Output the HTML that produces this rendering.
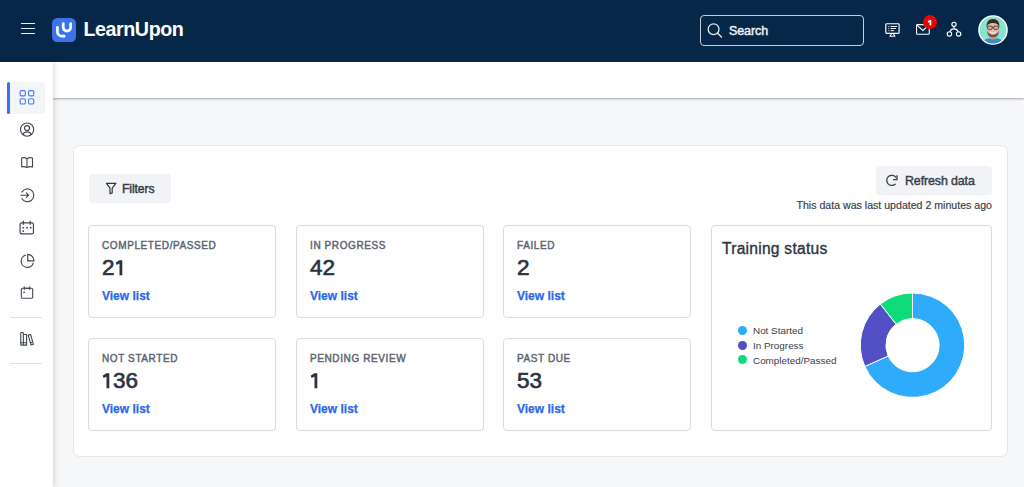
<!DOCTYPE html>
<html><head><meta charset="utf-8">
<style>
*{margin:0;padding:0;box-sizing:border-box}
html,body{width:1024px;height:487px;overflow:hidden;background:#f6f7f9;font-family:"Liberation Sans",sans-serif}
.abs{position:absolute}
#hdr{position:absolute;left:0;top:0;width:1024px;height:62px;background:#072748}
#side{position:absolute;left:0;top:62px;width:53px;height:425px;background:#fff;box-shadow:1px 0 6px rgba(0,0,0,.16);z-index:3}
#topbar{position:absolute;left:53px;top:62px;width:971px;height:36px;background:#fff;box-shadow:0 1px 2px rgba(0,0,0,.34);z-index:2}
#cont{position:absolute;left:73px;top:145.3px;width:935px;height:311.7px;background:#fff;border:1px solid #e5e7eb;border-radius:7px}
.btn{position:absolute;background:#f2f3f6;border-radius:4px}
.card{position:absolute;background:#fff;border:1px solid #d9dce1;border-radius:4px;width:188px;height:93px}
.lbl{position:absolute;left:13px;top:14px;font-size:10px;font-weight:normal;-webkit-text-stroke:0.45px #5e6672;letter-spacing:.6px;color:#5e6672;white-space:nowrap}
.num{position:absolute;left:13px;top:28.5px;font-size:22.5px;font-weight:normal;-webkit-text-stroke:0.65px #2b333e;letter-spacing:0px;color:#2b333e;white-space:nowrap}
.vl{position:absolute;left:13px;top:63px;font-size:12px;font-weight:bold;-webkit-text-stroke:0.25px #2c69e8;color:#2c69e8;white-space:nowrap}
.txt{white-space:nowrap;position:absolute}
.one{position:relative;color:transparent;-webkit-text-stroke:0 transparent;letter-spacing:-1.6px}
.one svg{position:absolute;left:0;top:0;overflow:visible}
</style></head><body>
<div id="hdr">
  <!-- hamburger -->
  <div class="abs" style="left:21px;top:23px;width:14px;height:1.4px;background:#e9edf2"></div>
  <div class="abs" style="left:21px;top:28px;width:14px;height:1.4px;background:#e9edf2"></div>
  <div class="abs" style="left:21px;top:33px;width:14px;height:1.4px;background:#e9edf2"></div>
  <!-- logo -->
  <svg class="abs" style="left:52px;top:17.5px" width="24" height="24.5" viewBox="0 0 24 24.5">
    <rect x="0" y="0" width="24" height="24.3" rx="5.5" fill="#3b73eb"/>
    <path d="M5.4 9.3 V13.7 A4.5 4.5 0 0 0 9.9 18.2 H12.1" fill="none" stroke="#fff" stroke-width="2.7" stroke-linecap="round"/>
    <path d="M11.2 5.5 V9.35 A3.75 3.75 0 0 0 18.7 9.35 V5.5" fill="none" stroke="#fff" stroke-width="2.7" stroke-linecap="round"/>
  </svg>
  <div class="txt" style="left:83.5px;top:18.4px;font-size:19.7px;font-weight:bold;color:#fff;letter-spacing:-0.45px">LearnUpon</div>
  <!-- search -->
  <div class="abs" style="left:700px;top:15px;width:164px;height:31px;border:1.3px solid #c9ced6;border-radius:4px"></div>
  <svg class="abs" style="left:706px;top:22px" width="18" height="17" viewBox="0 0 18 17">
    <circle cx="7.6" cy="7.2" r="5.4" fill="none" stroke="#e6e9ee" stroke-width="1.3"/>
    <path d="M11.6 11.2 L15.5 15" stroke="#e6e9ee" stroke-width="1.3" stroke-linecap="round"/>
  </svg>
  <div class="txt" style="left:729px;top:23.5px;font-size:12.5px;font-weight:normal;-webkit-text-stroke:0.45px #eef1f5;color:#eef1f5;letter-spacing:-0.1px">Search</div>
  <!-- monitor icon -->
  <svg class="abs" style="left:883px;top:21px" width="19" height="18" viewBox="0 0 19 18">
    <rect x="2.8" y="2.7" width="13.3" height="9.7" rx="0.9" fill="none" stroke="#fff" stroke-width="1.15"/>
    <path d="M8.6 12.5 L7 15.2 H11.9 L10.3 12.5" fill="none" stroke="#fff" stroke-width="1.1" stroke-linejoin="round"/>
    <path d="M7.6 5.5 H14 M7.6 7.5 H13 M7.6 9.6 H11" stroke="#fff" stroke-width="0.95" />
    <path d="M5.4 5.5 H6.3 M5.4 7.5 H6.3 M5.4 9.6 H6.3" stroke="#fff" stroke-width="0.95"/>
  </svg>
  <!-- mail icon -->
  <svg class="abs" style="left:914px;top:21px" width="18" height="16" viewBox="0 0 18 16">
    <rect x="2.55" y="3.65" width="12.7" height="9.65" rx="0.9" fill="none" stroke="#fff" stroke-width="1.1"/>
    <path d="M2.9 4.1 L8.9 9.4 L14.9 4.1" fill="none" stroke="#fff" stroke-width="1.1"/>
  </svg>
  <div class="abs" style="left:923px;top:15px;width:14px;height:14px;border-radius:50%;background:#e50606"></div>
  <svg class="abs" style="left:918px;top:15px" width="20" height="15" viewBox="918 15 20 15"><path d="M929.3 19.9 H931.3 V25.3 H929.6 V22 L928.3 22.7 L927.8 21.2 Z" fill="#fff"/></svg>
  <!-- org icon -->
  <svg class="abs" style="left:945px;top:20px" width="18" height="18" viewBox="0 0 18 18">
    <circle cx="9" cy="4.3" r="2.1" fill="none" stroke="#fff" stroke-width="1.15"/>
    <circle cx="4.4" cy="13.9" r="2.2" fill="none" stroke="#fff" stroke-width="1.15"/>
    <circle cx="13.6" cy="13.9" r="2.2" fill="none" stroke="#fff" stroke-width="1.15"/>
    <path d="M9 6.4 V8.8 M5.1 11.8 Q5.6 8.8 9 8.8 Q12.4 8.8 12.9 11.8" fill="none" stroke="#fff" stroke-width="1.15"/>
  </svg>
  <!-- avatar -->
  <svg class="abs" style="left:978px;top:14.5px" width="30" height="30" viewBox="0 0 30 30">
    <defs><clipPath id="av"><circle cx="15" cy="15" r="13.4"/></clipPath></defs>
    <circle cx="15" cy="15" r="14.8" fill="#fff"/>
    <g clip-path="url(#av)">
      <rect width="30" height="30" fill="#88e3d2"/>
      <path d="M3 30 Q5 24.2 11 23.3 H19 Q25 24.2 27 30 Z" fill="#3a8ec2"/>
      <rect x="12.3" y="19" width="5.4" height="5.2" fill="#d29c88"/>
      <ellipse cx="15" cy="14.3" rx="6.3" ry="8.1" fill="#e4baa6"/>
      <path d="M8.7 12.2 Q8.2 4.1 15 4.1 Q21.8 4.1 21.3 12.2 Q20.6 8.3 15 8.1 Q9.4 8.3 8.7 12.2 Z" fill="#3b2a22"/>
      <path d="M8.8 15 Q9 22.5 15 22.5 Q21 22.5 21.2 15 Q20 19.4 15 19.7 Q10 19.4 8.8 15 Z" fill="#6e5649"/>
      <path d="M12.6 17.6 Q15 18.8 17.4 17.6" stroke="#fff" stroke-width="0.9" fill="none"/>
      <rect x="9.7" y="11.2" width="4.5" height="3.1" rx="0.9" fill="none" stroke="#252525" stroke-width="0.8"/>
      <rect x="15.8" y="11.2" width="4.5" height="3.1" rx="0.9" fill="none" stroke="#252525" stroke-width="0.8"/>
      <path d="M14.2 12 H15.8 M8.6 11.8 H9.7 M20.3 11.8 H21.4" stroke="#252525" stroke-width="0.7"/>
    </g>
  </svg>
</div>

<div id="side">
  <div class="abs" style="left:7px;top:20px;width:38px;height:32px;background:#f4f5f8;border-radius:2px"></div>
  <div class="abs" style="left:7px;top:20px;width:3px;height:32px;background:#3b6ef0;border-radius:2px"></div>
  <svg class="abs" style="left:18px;top:27px" width="18" height="18" viewBox="0 0 18 18">
    <g fill="none" stroke="#4a7cf0" stroke-width="1.15">
      <rect x="2.15" y="1.65" width="5.2" height="5.2" rx="1.3"/>
      <rect x="10.55" y="1.65" width="5.2" height="5.2" rx="1.3"/>
      <rect x="2.15" y="9.75" width="5.2" height="5.2" rx="1.3"/>
      <rect x="10.55" y="9.75" width="5.2" height="5.2" rx="1.3"/>
    </g>
  </svg>
  <!-- user -->
  <svg class="abs" style="left:18px;top:58px" width="18" height="18" viewBox="0 0 18 18">
    <g fill="none" stroke="#414853" stroke-width="1.15">
      <circle cx="9.1" cy="9.6" r="6.6"/>
      <circle cx="9.05" cy="8.05" r="2.5"/>
      <path d="M4.7 14.4 Q5.9 11.8 9.05 11.8 Q12.2 11.8 13.4 14.4"/>
    </g>
  </svg>
  <!-- book -->
  <svg class="abs" style="left:18px;top:92px" width="18" height="18" viewBox="0 0 18 18">
    <g fill="none" stroke="#414853" stroke-width="1.1" stroke-linejoin="round">
      <path d="M3.7 4 Q6.6 3.1 9 4.6 Q11.4 3.1 14.5 4 V12.9 Q11.6 12.1 9 13.6 Q6.4 12.1 3.7 12.9 Z"/>
      <path d="M9 4.6 V13.6"/>
    </g>
  </svg>
  <!-- enter -->
  <svg class="abs" style="left:18px;top:124px" width="18" height="18" viewBox="0 0 18 18">
    <g fill="none" stroke="#414853" stroke-width="1.15" stroke-linecap="round" stroke-linejoin="round">
      <path d="M3.9 6.1 A6.4 6.4 0 1 1 3.9 12.5"/>
      <path d="M2.8 9.2 H10.6 M8.4 7 L10.6 9.2 L8.4 11.4"/>
    </g>
  </svg>
  <!-- calendar -->
  <svg class="abs" style="left:18px;top:157px" width="18" height="18" viewBox="0 0 18 18">
    <g fill="none" stroke="#414853" stroke-width="1.2" stroke-linecap="round">
      <rect x="2.05" y="3.85" width="13.4" height="11" rx="1.6"/>
      <path d="M5.4 2.2 V5.3 M12.2 2.2 V5.3"/>
    </g>
    <g fill="#414853">
      <rect x="4.4" y="7.9" width="1.6" height="1.6"/>
      <rect x="8.2" y="7.9" width="1.6" height="1.6"/>
      <rect x="12" y="7.9" width="1.6" height="1.6"/>
      <rect x="4.4" y="11.3" width="1.6" height="1.6"/>
    </g>
  </svg>
  <!-- pie -->
  <svg class="abs" style="left:18px;top:189.6px" width="18" height="18" viewBox="0 0 18 18">
    <g fill="none" stroke="#414853" stroke-width="1.2" stroke-linejoin="round">
      <path d="M7.8 3.2 A6.2 6.2 0 1 0 15.4 10.6"/>
      <path d="M9.7 2.3 V8.9 H16 A6.6 6.6 0 0 0 9.7 2.3 Z"/>
    </g>
  </svg>
  <!-- calendar 2 -->
  <svg class="abs" style="left:18px;top:222px" width="18" height="18" viewBox="0 0 18 18">
    <g fill="none" stroke="#414853" stroke-width="1.1" stroke-linecap="round">
      <rect x="3.3" y="4.3" width="11.4" height="10" rx="1.4"/>
      <path d="M6.2 2.8 V5.6 M11.8 2.8 V5.6 M6.2 4.3 H11.8"/>
    </g>
    <rect x="5.4" y="7.6" width="1.5" height="1.5" fill="#414853"/>
  </svg>
  <div class="abs" style="left:10px;top:255px;width:32px;height:1px;background:#dfe2e6"></div>
  <!-- library -->
  <svg class="abs" style="left:18px;top:268px" width="18" height="18" viewBox="0 0 18 18">
    <g fill="none" stroke="#414853" stroke-width="1.1" stroke-linejoin="round">
      <rect x="2.75" y="2.45" width="2.6" height="12.7" rx="0.5"/>
      <path d="M5.35 4.45 H8.6 V15.15 H5.35"/>
      <path d="M10.2 5.1 L12.6 4.5 L15.4 14.3 L13 15 Z"/>
      <path d="M2.75 12.8 H8.6 M12.1 12.9 L14.6 12.2"/>
    </g>
  </svg>
  <div class="abs" style="left:10px;top:301px;width:32px;height:1px;background:#dfe2e6"></div>
</div>

<div id="topbar"></div>

<div id="cont"></div>
<div class="btn" style="left:89px;top:174.4px;width:82px;height:28.6px"></div>
<svg class="abs" style="left:104px;top:181px" width="14" height="15" viewBox="0 0 14 15">
  <path d="M2.4 2.4 H11.9 L8.2 7.2 V11.9 L6 12.8 V7.2 Z" fill="none" stroke="#2e3540" stroke-width="1.15" stroke-linejoin="round"/>
</svg>
<div class="txt" style="left:122px;top:182px;font-size:12.2px;font-weight:normal;-webkit-text-stroke:0.45px #353c47;color:#353c47;letter-spacing:-0.1px">Filters</div>
<div class="btn" style="left:876px;top:166px;width:116px;height:28.5px"></div>
<svg class="abs" style="left:884px;top:173px" width="16" height="16" viewBox="0 0 16 16">
  <path d="M12 4.4 A5.1 5.1 0 1 0 11.2 11.2" fill="none" stroke="#353c47" stroke-width="1.25" stroke-linecap="round"/>
  <path d="M13 2.2 V6.5 H9.1" fill="none" stroke="#353c47" stroke-width="1.25" stroke-linejoin="miter"/>
</svg>
<div class="txt" style="left:905px;top:174px;font-size:12.4px;font-weight:normal;-webkit-text-stroke:0.45px #3a414c;color:#3a414c;letter-spacing:-0.1px">Refresh data</div>
<div class="txt" style="right:32px;top:199px;font-size:10.6px;-webkit-text-stroke:0.15px #363c45;color:#363c45">This data was last updated 2 minutes ago</div>
<div class="card" style="left:88px;top:225px"><div class="lbl">COMPLETED/PASSED</div><div class="num">2<span class="one">1<svg width="12.5" height="26" viewBox="0 0 12.5 26"><path d="M4.3 5.3 H7.3 V20.35 H4.5 V8.4 L1.7 9.9 L0.7 7.8 Z" fill="#2b333e"/></svg></span></div><div class="vl">View list</div></div>
<div class="card" style="left:296px;top:225px"><div class="lbl">IN PROGRESS</div><div class="num">42</div><div class="vl">View list</div></div>
<div class="card" style="left:503px;top:225px"><div class="lbl">FAILED</div><div class="num">2</div><div class="vl">View list</div></div>
<div class="card" style="left:88px;top:338px"><div class="lbl">NOT STARTED</div><div class="num"><span class="one">1<svg width="12.5" height="26" viewBox="0 0 12.5 26"><path d="M4.3 5.3 H7.3 V20.35 H4.5 V8.4 L1.7 9.9 L0.7 7.8 Z" fill="#2b333e"/></svg></span>36</div><div class="vl">View list</div></div>
<div class="card" style="left:296px;top:338px"><div class="lbl">PENDING REVIEW</div><div class="num"><span class="one">1<svg width="12.5" height="26" viewBox="0 0 12.5 26"><path d="M4.3 5.3 H7.3 V20.35 H4.5 V8.4 L1.7 9.9 L0.7 7.8 Z" fill="#2b333e"/></svg></span></div><div class="vl">View list</div></div>
<div class="card" style="left:503px;top:338px"><div class="lbl">PAST DUE</div><div class="num">53</div><div class="vl">View list</div></div>
<div class="card" style="left:711px;top:225px;width:281px;height:206px">
  <div class="txt" style="left:10px;top:14.3px;font-size:15.6px;letter-spacing:.25px;-webkit-text-stroke:0.35px #2d343e;color:#2d343e">Training status</div>
</div>
<div class="abs" style="left:738px;top:325.8px;width:9px;height:9px;border-radius:50%;background:#2eabfb"></div>
<div class="abs" style="left:738px;top:340.7px;width:9px;height:9px;border-radius:50%;background:#5350c6"></div>
<div class="abs" style="left:738px;top:355.3px;width:9px;height:9px;border-radius:50%;background:#0ddc78"></div>
<div class="txt" style="left:753px;top:325px;font-size:9.9px;color:#383e47">Not Started</div>
<div class="txt" style="left:753px;top:340px;font-size:9.9px;color:#383e47">In Progress</div>
<div class="txt" style="left:753px;top:354.5px;font-size:9.9px;color:#383e47">Completed/Passed</div>
<svg class="abs" style="left:858px;top:291px" width="110" height="110" viewBox="0 0 110 110" id="donut">
  <path d="M54.50 2.00 A52.2 52.2 0 1 1 6.80 75.41 L30.19 65.01 A26.6 26.6 0 1 0 54.50 27.60 Z" fill="#2eabfb" stroke="#fff" stroke-width="1" stroke-linejoin="miter"/>
  <path d="M6.80 75.41 A52.2 52.2 0 0 1 22.37 13.06 L38.13 33.24 A26.6 26.6 0 0 0 30.19 65.01 Z" fill="#5350c6" stroke="#fff" stroke-width="1" stroke-linejoin="miter"/>
  <path d="M22.37 13.06 A52.2 52.2 0 0 1 54.50 2.00 L54.50 27.60 A26.6 26.6 0 0 0 38.13 33.24 Z" fill="#0ddc78" stroke="#fff" stroke-width="1" stroke-linejoin="miter"/>
</svg>


</body></html>
